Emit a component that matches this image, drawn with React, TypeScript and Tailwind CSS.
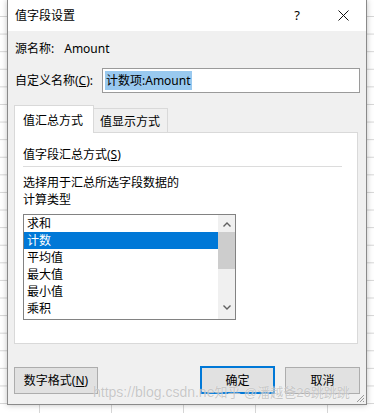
import React from "react";

const font = { fontFamily: '"Noto Sans", "Noto Sans CJK SC", sans-serif' };

const items = ["求和", "计数", "平均值", "最大值", "最小值", "乘积"];

export default function App() {
  return (
    <div
      className="relative w-[374px] h-[413px] overflow-hidden bg-white bg-[image:linear-gradient(#d6d6d6_1px,transparent_1px),linear-gradient(90deg,#d6d6d6_1px,transparent_1px)] bg-[size:72px_17.6px] bg-[position:39px_16px] text-[12px] text-black"
      style={font}
    >
      <div className="relative ml-[7px] w-[360px] h-[405px] border-x border-b border-[#8a8a8a] bg-[#f0f0f0] flex flex-col shadow-[0_0_6px_rgba(0,0,0,0.25)]">
        {/* title bar */}
        <div className="h-[31px] bg-white flex items-center pl-[7px] shrink-0">
          <span className="leading-[17px]">值字段设置</span>
          <span className="ml-auto w-[10px] text-center text-[13px] leading-[17px]">?</span>
          <svg className="ml-[36px] mr-[17px]" width="11" height="11" viewBox="0 0 11 11">
            <path d="M0.5 0.5 L10.5 10.5 M10.5 0.5 L0.5 10.5" stroke="#111" strokeWidth="1" fill="none" />
          </svg>
        </div>

        {/* source name */}
        <div className="mt-[9px] h-[17px] pl-[7px] flex items-center leading-[17px]">
          <span>源名称:</span>
          <span className="ml-[10px]">Amount</span>
        </div>

        {/* custom name */}
        <div className="mt-[11px] h-[25px] pl-[7px] flex items-center">
          <span className="leading-[17px]">
            自定义名称(<span className="underline">C</span>):
          </span>
          <div className="ml-auto mr-[6px] w-[258px] h-[25px] border border-[#9a9a9a] bg-white flex items-center pl-[2px]">
            <span className="bg-[#99c9ef] leading-[19px] px-[1px]">计数项:Amount</span>
          </div>
        </div>

        {/* tabs */}
        <div className="mt-[12px] ml-[6px] h-[27px] flex items-end">
          <div className="relative z-10 w-[80px] h-[28px] -mb-px border border-b-0 border-[#d9d9d9] bg-white pl-[8px] pt-[6px] leading-[17px]">
            值汇总方式
          </div>
          <div className="w-[74px] h-[24px] border border-l-0 border-b-0 border-[#d9d9d9] bg-[#f0f0f0] pl-[6px] pt-[4px] leading-[17px]">
            值显示方式
          </div>
        </div>

        {/* panel */}
        <div className="ml-[6px] w-[344px] h-[212px] border border-[#d9d9d9] bg-white pl-[8px] pr-[15px] pt-[13px] flex flex-col">
          <div className="h-[17px] leading-[17px]">
            值字段汇总方式(<span className="underline">S</span>)
          </div>
          <div className="mt-[3px] h-px bg-[#dcdcdc]" />
          <div className="mt-[7px] h-[17px] leading-[17px]">选择用于汇总所选字段数据的</div>
          <div className="h-[17px] leading-[17px]">计算类型</div>

          {/* listbox */}
          <div className="mt-[6px] w-[213px] h-[106px] border border-[#828282] bg-white flex">
            <div className="flex-1 flex flex-col">
              {items.map((t, i) => (
                <div
                  key={t}
                  className={
                    i === 1
                      ? "h-[17px] leading-[17px] pl-[3px] bg-[#0078d7] text-white"
                      : "h-[17px] leading-[17px] pl-[3px]"
                  }
                >
                  {t}
                </div>
              ))}
            </div>
            <div className="w-[17px] bg-[#f0f0f0] flex flex-col items-center">
              <svg className="mt-[7px]" width="8" height="5" viewBox="0 0 8 5">
                <path d="M0.5 4.5 L4 1 L7.5 4.5" stroke="#606060" strokeWidth="1.4" fill="none" />
              </svg>
              <div className="mt-[5px] w-[17px] h-[37px] bg-[#cdcdcd]" />
              <svg className="mt-[36px]" width="8" height="5" viewBox="0 0 8 5">
                <path d="M0.5 0.5 L4 4 L7.5 0.5" stroke="#606060" strokeWidth="1.4" fill="none" />
              </svg>
            </div>
          </div>
        </div>

        {/* buttons */}
        <div className="mt-[22px] h-[28px] flex items-start pl-[6px] pr-[6px]">
          <div className="mt-[1px] w-[84px] h-[27px] border border-[#adadad] bg-[#e1e1e1] flex items-center justify-center leading-[17px]">
            数字格式(<span className="underline">N</span>)
          </div>
          <div className="ml-auto w-[75px] h-[28px] border-2 border-[#0078d7] bg-[#e1e1e1] flex items-center justify-center leading-[17px]">
            确定
          </div>
          <div className="ml-[10px] mt-[1px] w-[75px] h-[27px] border border-[#adadad] bg-[#e1e1e1] flex items-center justify-center leading-[17px]">
            取消
          </div>
        </div>

        {/* resize grip */}
        <svg className="absolute right-[1px] bottom-[1px]" width="10" height="10" viewBox="0 0 10 10">
          <path d="M9 2 L2 9 M9 5 L5 9 M9 8 L8 9" stroke="#9a9a9a" strokeWidth="1" fill="none" />
        </svg>
      </div>

      {/* watermark */}
      <div
        className="absolute left-[93px] top-[383px] text-[14px] leading-[18px] whitespace-nowrap text-[rgba(165,165,165,0.6)] [text-shadow:0_0_1px_rgba(255,255,255,0.9)]"
        style={{ fontFamily: '"Liberation Sans", "Noto Sans CJK SC", sans-serif' }}
      >
        https://blog.csdn.ne<span className="text-[13px]">知乎 @潘越爸26跳跳跳</span>
      </div>
    </div>
  );
}
